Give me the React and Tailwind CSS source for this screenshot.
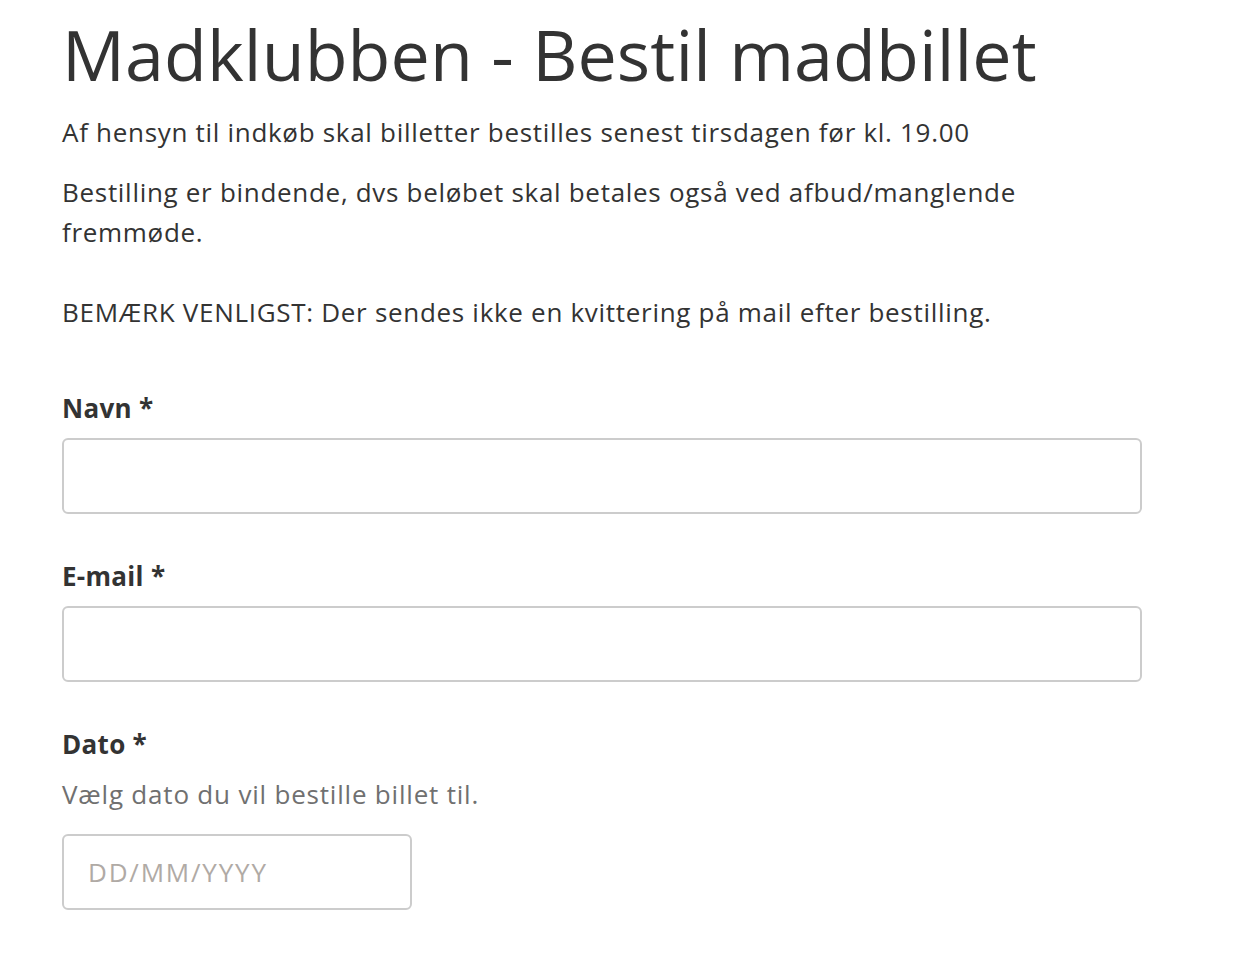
export default function App() {
  return (
    <div className="min-h-screen bg-white text-[#333333] font-['Open_Sans',sans-serif]">
      <div className="px-[62px] pt-[12px]">
        <h1 className="text-[70px] leading-[84px] font-normal tracking-[0.1px]">Madklubben - Bestil madbillet</h1>
        <p className="mt-[16px] text-[26px] leading-[40px] tracking-[0.7px]">Af hensyn til indkøb skal billetter bestilles senest tirsdagen før kl. 19.00</p>
        <p className="mt-[20px] text-[26px] leading-[40px] tracking-[0.7px] max-w-[1080px]">Bestilling er bindende, dvs beløbet skal betales også ved afbud/manglende fremmøde.</p>
        <p className="mt-[40px] text-[26px] leading-[40px] tracking-[0.7px]">BEMÆRK VENLIGST: Der sendes ikke en kvittering på mail efter bestilling.</p>

        <form className="mt-[56px] w-[1080px]">
          <label className="block text-[26px] font-bold leading-[40px] tracking-[0.3px]">Navn *</label>
          <input type="text" className="mt-[10px] block w-full h-[76px] rounded-[6px] border-2 border-[#cccccc] bg-white px-6 text-[26px] outline-none" />

          <label className="mt-[42px] block text-[26px] font-bold leading-[40px] tracking-[0.3px]">E-mail *</label>
          <input type="email" className="mt-[10px] block w-full h-[76px] rounded-[6px] border-2 border-[#cccccc] bg-white px-6 text-[26px] outline-none" />

          <label className="mt-[42px] block text-[26px] font-bold leading-[40px] tracking-[0.3px]">Dato *</label>
          <p className="mt-[10px] text-[26px] leading-[40px] tracking-[0.8px] text-[#707070]">Vælg dato du vil bestille billet til.</p>
          <input type="text" placeholder="DD/MM/YYYY" className="mt-[20px] block w-[350px] h-[76px] rounded-[6px] border-2 border-[#cccccc] bg-white px-[24px] text-[26px] tracking-[1.8px] placeholder:text-[#b0aaa5] outline-none" />
        </form>
      </div>
    </div>
  );
}
